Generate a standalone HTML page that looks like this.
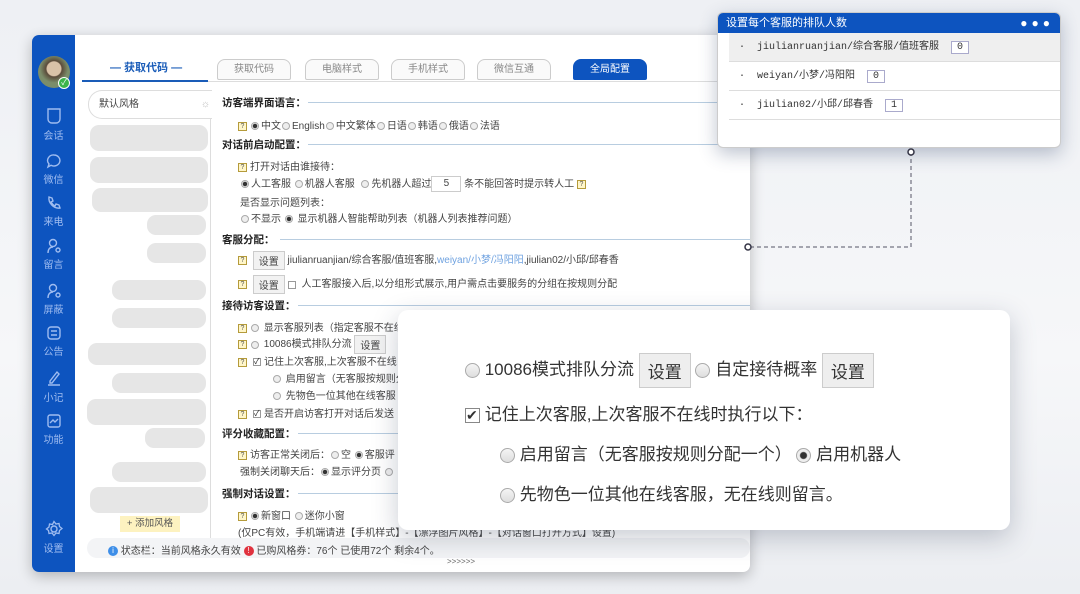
<!DOCTYPE html>
<html><head><meta charset="utf-8"><style>
*{margin:0;padding:0;box-sizing:border-box}
body{width:1080px;height:594px;overflow:hidden;background:linear-gradient(180deg,#eef0f4 0%,#f6f7f9 60%,#eceef2 100%);font-family:"Liberation Sans","Noto Sans CJK SC",sans-serif;position:relative;color:#333}
.abs{position:absolute}
.win{left:32px;top:35px;width:718px;height:537px;background:#fff;border-radius:7px;overflow:hidden;box-shadow:0 4px 14px rgba(0,0,0,.25)}
.side{left:0;top:0;width:43px;height:537px;background:#0d54bf}
.si{position:absolute;left:0;width:43px;text-align:center;color:#9fbcf0;font-size:10px}
.si svg{display:block;margin:0 auto 2px}
.tab{position:absolute;top:24px;height:21px;width:74px;border:1px solid #ccc;border-radius:8px 8px 2px 2px;background:#fafafa;font-size:10px;color:#888;text-align:center;line-height:20px}
.pill{position:absolute;background:#e6e6e6;border-radius:9px;height:20px}
.c{font-size:10px;color:#444;white-space:nowrap;position:absolute}
.h{font-size:10.5px;font-weight:bold;color:#222;position:absolute;white-space:nowrap}
.hl{position:absolute;height:1px;background:#b8cde0}
.q{display:inline-block;width:9px;height:9px;border:1px solid #b59b3b;background:#fff6c9;font-size:7px;line-height:8px;text-align:center;color:#555;vertical-align:middle;margin-right:3px}
.r{display:inline-block;width:8px;height:8px;border:1px solid #aaa;border-radius:50%;background:#eee;vertical-align:middle;margin:0 2px 0 1px}
.r.on{background:radial-gradient(circle,#333 0 2px,#eee 2.5px)}
.cb{display:inline-block;width:8px;height:8px;border:1px solid #999;background:#fff;vertical-align:middle;margin:0 3px;font-size:8px;line-height:6px;color:#222}
.btn{display:inline-block;border:1px solid #ccc;background:#f2f2f2;padding:1px 5px;font-size:10px;vertical-align:middle}
.big{font-size:17px;color:#333;position:absolute;white-space:nowrap}
.br{display:inline-block;width:15px;height:15px;border:1px solid #aaa;border-radius:50%;background:linear-gradient(#f5f5f5,#ddd);vertical-align:middle}
.bb{display:inline-block;border:1px solid #ccc;background:#eee;padding:4px 8px;font-size:17px;vertical-align:middle}
</style></head><body>

<div class="abs win">
 <div class="abs side">
  <div class="abs" style="left:6px;top:21px;width:32px;height:32px;border-radius:50%;background:radial-gradient(circle at 50% 40%,#d9c2a8 0 7px,#5a4a3a 8px,#7b8d6a 14px)"></div>
  <div class="abs" style="left:26px;top:42px;width:12px;height:12px;border-radius:50%;background:#3cb44a;border:1px solid #fff;color:#fff;font-size:8px;line-height:10px;text-align:center">✓</div>
  <div class="si" style="top:72px"><svg width="16" height="18" viewBox="0 0 16 18"><path d="M2 2h12v10a4 4 0 0 1-4 4H6a4 4 0 0 1-4-4z" fill="none" stroke="#9fbcf0" stroke-width="1.4"/></svg>会话</div>
  <div class="si" style="top:118px"><svg width="16" height="16" viewBox="0 0 16 16"><path d="M8 2a6 5.5 0 1 1-3 10.3L2 14l1-3A6 5.5 0 0 1 8 2z" fill="none" stroke="#9fbcf0" stroke-width="1.4"/></svg>微信</div>
  <div class="si" style="top:160px"><svg width="16" height="16" viewBox="0 0 16 16"><path d="M3 2l3 1 1 3-2 1c1 2 2 3 4 4l1-2 3 1 1 3c-6 1-12-5-11-11z" fill="none" stroke="#9fbcf0" stroke-width="1.4"/></svg>来电</div>
  <div class="si" style="top:203px"><svg width="16" height="16" viewBox="0 0 16 16"><circle cx="7" cy="5" r="3.5" fill="none" stroke="#9fbcf0" stroke-width="1.4"/><path d="M2 15c0-4 2-6 5-6M10 12a2 2 0 1 0 4 0a2 2 0 1 0-4 0" fill="none" stroke="#9fbcf0" stroke-width="1.4"/></svg>留言</div>
  <div class="si" style="top:248px"><svg width="16" height="16" viewBox="0 0 16 16"><circle cx="7" cy="5" r="3.5" fill="none" stroke="#9fbcf0" stroke-width="1.4"/><path d="M2 15c0-4 2-6 5-6M10 12a2 2 0 1 0 4 0a2 2 0 1 0-4 0" fill="none" stroke="#9fbcf0" stroke-width="1.4"/></svg>屏蔽</div>
  <div class="si" style="top:290px"><svg width="16" height="16" viewBox="0 0 16 16"><rect x="2" y="2" width="12" height="12" rx="3" fill="none" stroke="#9fbcf0" stroke-width="1.4"/><path d="M5 6h6M5 10h6" stroke="#9fbcf0" stroke-width="1.4"/></svg>公告</div>
  <div class="si" style="top:334px"><svg width="16" height="18" viewBox="0 0 16 18"><path d="M4 12l7-9 2 2-7 9H4zM2 16h12" fill="none" stroke="#9fbcf0" stroke-width="1.4"/></svg>小记</div>
  <div class="si" style="top:378px"><svg width="16" height="16" viewBox="0 0 16 16"><rect x="2" y="2" width="12" height="12" rx="2" fill="none" stroke="#9fbcf0" stroke-width="1.4"/><path d="M4 10l3-3 2 2 3-3" fill="none" stroke="#9fbcf0" stroke-width="1.4"/></svg>功能</div>
  <div class="si" style="top:485px"><svg width="18" height="18" viewBox="0 0 18 18"><circle cx="9" cy="9" r="3" fill="none" stroke="#9fbcf0" stroke-width="1.4"/><path d="M9 1.5l2 2.5 3-.5.5 3 2.5 2-2.5 2-.5 3-3-.5-2 2.5-2-2.5-3 .5-.5-3L1.5 9 4 7l.5-3 3 .5z" fill="none" stroke="#9fbcf0" stroke-width="1.3"/></svg>设置</div>
 </div>

 <div class="abs" style="left:78px;top:24px;font-size:11px;font-weight:bold;color:#1a5cb8">— 获取代码 —</div>
 <div class="abs" style="left:50px;top:45px;width:126px;height:2px;background:#1a5cb8"></div>
 <div class="tab" style="left:185px">获取代码</div>
 <div class="tab" style="left:273px">电脑样式</div>
 <div class="tab" style="left:359px">手机样式</div>
 <div class="tab" style="left:445px">微信互通</div>
 <div class="tab" style="left:541px;background:#0d54bf;color:#fff;border-color:#0d54bf">全局配置</div>
 <div class="abs" style="left:176px;top:46px;width:542px;height:1px;background:#ddd"></div>

 <div class="abs" style="left:56px;top:55px;width:124px;height:29px;border:1px solid #ddd;border-right:none;border-radius:14px 0 0 14px;font-size:10px;line-height:27px;padding-left:10px;color:#444">默认风格<span style="position:absolute;right:2px;color:#bbb">☼</span></div>
 <div class="abs" style="left:178px;top:84px;width:1px;height:420px;background:#ddd"></div>
 <div class="pill" style="left:58px;top:90px;width:118px;height:26px"></div>
 <div class="pill" style="left:58px;top:122px;width:118px;height:26px"></div>
 <div class="pill" style="left:60px;top:153px;width:116px;height:24px"></div>
 <div class="pill" style="left:115px;top:180px;width:59px"></div>
 <div class="pill" style="left:115px;top:208px;width:59px"></div>
 <div class="pill" style="left:80px;top:245px;width:94px"></div>
 <div class="pill" style="left:80px;top:273px;width:94px"></div>
 <div class="pill" style="left:56px;top:308px;width:118px;height:22px"></div>
 <div class="pill" style="left:80px;top:338px;width:94px"></div>
 <div class="pill" style="left:55px;top:364px;width:119px;height:26px"></div>
 <div class="pill" style="left:113px;top:393px;width:60px"></div>
 <div class="pill" style="left:80px;top:427px;width:94px"></div>
 <div class="pill" style="left:58px;top:452px;width:118px;height:26px"></div>
 <div class="abs" style="left:88px;top:481px;width:60px;height:16px;background:#fdf2c0;font-size:9.5px;line-height:16px;text-align:center;color:#555">+ 添加风格</div>

 <div class="h" style="left:190px;top:60px">访客端界面语言：</div><div class="hl" style="left:276px;top:67px;width:442px"></div>
 <div class="c" style="left:206px;top:82px"><span class="q">?</span><span class="r on"></span>中文<span class="r"></span>English<span class="r"></span>中文繁体<span class="r"></span>日语<span class="r"></span>韩语<span class="r"></span>俄语<span class="r"></span>法语</div>
 <div class="h" style="left:190px;top:102px">对话前启动配置：</div><div class="hl" style="left:276px;top:109px;width:442px"></div>
 <div class="c" style="left:206px;top:123px"><span class="q">?</span>打开对话由谁接待：</div>
 <div class="c" style="left:208px;top:140px"><span class="r on"></span>人工客服 <span class="r"></span>机器人客服 &nbsp;<span class="r"></span>先机器人超过<span style="display:inline-block;width:30px;height:16px;border:1px solid #ccc;text-align:center;line-height:14px;vertical-align:middle">5</span> 条不能回答时提示转人工 <span class="q">?</span></div>
 <div class="c" style="left:208px;top:159px">是否显示问题列表：</div>
 <div class="c" style="left:208px;top:175px"><span class="r"></span>不显示 <span class="r on"></span> 显示机器人智能帮助列表（机器人列表推荐问题）</div>
 <div class="h" style="left:190px;top:197px">客服分配：</div><div class="hl" style="left:248px;top:204px;width:470px"></div>
 <div class="c" style="left:206px;top:216px"><span class="q">?</span> <span class="btn">设置</span> jiulianruanjian/综合客服/值班客服,<span style="color:#6fa2e0">weiyan/小梦/冯阳阳</span>,jiulian02/小邱/邱春香</div>
 <div class="c" style="left:206px;top:240px"><span class="q">?</span> <span class="btn">设置</span><span class="cb"></span> 人工客服接入后,以分组形式展示,用户需点击要服务的分组在按规则分配</div>
 <div class="h" style="left:190px;top:263px">接待访客设置：</div><div class="hl" style="left:266px;top:270px;width:452px"></div>
 <div class="c" style="left:206px;top:284px"><span class="q">?</span><span class="r"></span> 显示客服列表（指定客服不在线</div>
 <div class="c" style="left:206px;top:300px"><span class="q">?</span><span class="r"></span> 10086模式排队分流 <span class="btn">设置</span></div>
 <div class="c" style="left:206px;top:318px"><span class="q">?</span><span class="cb">✓</span>记住上次客服,上次客服不在线</div>
 <div class="c" style="left:240px;top:335px"><span class="r"></span> 启用留言（无客服按规则分</div>
 <div class="c" style="left:240px;top:352px"><span class="r"></span> 先物色一位其他在线客服</div>
 <div class="c" style="left:206px;top:370px"><span class="q">?</span><span class="cb">✓</span>是否开启访客打开对话后发送</div>
 <div class="h" style="left:190px;top:391px">评分收藏配置：</div><div class="hl" style="left:266px;top:398px;width:452px"></div>
 <div class="c" style="left:206px;top:411px"><span class="q">?</span>访客正常关闭后：<span class="r"></span>空 <span class="r on"></span>客服评</div>
 <div class="c" style="left:208px;top:428px">强制关闭聊天后：<span class="r on"></span>显示评分页 <span class="r"></span></div>
 <div class="h" style="left:190px;top:451px">强制对话设置：</div><div class="hl" style="left:266px;top:458px;width:452px"></div>
 <div class="c" style="left:206px;top:472px"><span class="q">?</span><span class="r on"></span>新窗口 <span class="r"></span>迷你小窗</div>
 <div class="c" style="left:206px;top:489px">(仅PC有效，手机端请进【手机样式】-【漂浮图片风格】-【对话窗口打开方式】设置)</div>
 <div class="abs" style="left:55px;top:503px;width:663px;height:20px;background:#f3f4f6;border-radius:10px"></div>
 <div class="c" style="left:76px;top:507px"><span style="display:inline-block;width:10px;height:10px;border-radius:50%;background:#3d8ee8;color:#fff;font-size:8px;line-height:10px;text-align:center;vertical-align:middle">i</span> 状态栏：当前风格永久有效 <span style="display:inline-block;width:10px;height:10px;border-radius:50%;background:#e0323e;color:#fff;font-size:8px;line-height:10px;text-align:center;vertical-align:middle">!</span> 已购风格券：76个 已使用72个 剩余4个。</div>
 <div class="c" style="left:415px;top:522px;font-size:8px;color:#666">&gt;&gt;&gt;&gt;&gt;&gt;</div>
</div>

<!-- top-right popup -->
<div class="abs" style="left:717px;top:12px;width:344px;height:136px;background:#fff;border-radius:6px;overflow:hidden;box-shadow:0 6px 18px rgba(40,60,100,.3);border:1px solid #ccc">
 <div style="height:20px;background:#0d54bf;color:#fff;font-size:11px;line-height:20px;padding-left:8px">设置每个客服的排队人数<span style="position:absolute;right:6px;top:0;letter-spacing:4px;font-size:12px">●●●</span></div>
 <div class="abs" style="left:11px;top:20px;width:333px;height:29px;background:#efefef;border-bottom:1px solid #ddd;font-family:'Liberation Mono','Noto Sans CJK SC',monospace;font-size:10px;line-height:29px;padding-left:10px">·&nbsp; jiulianruanjian/综合客服/值班客服 &nbsp;<span style="border:1px solid #aac;background:#fff;padding:0 5px">0</span></div>
 <div class="abs" style="left:11px;top:49px;width:333px;height:29px;border-bottom:1px solid #ddd;font-family:'Liberation Mono','Noto Sans CJK SC',monospace;font-size:10px;line-height:29px;padding-left:10px">·&nbsp; weiyan/小梦/冯阳阳 &nbsp;<span style="border:1px solid #aac;background:#fff;padding:0 5px">0</span></div>
 <div class="abs" style="left:11px;top:78px;width:333px;height:29px;border-bottom:1px solid #ddd;font-family:'Liberation Mono','Noto Sans CJK SC',monospace;font-size:10px;line-height:29px;padding-left:10px">·&nbsp; jiulian02/小邱/邱春香 &nbsp;<span style="border:1px solid #aac;background:#fff;padding:0 5px">1</span></div>
</div>
<svg class="abs" style="left:740px;top:145px" width="180" height="110"><path d="M171 7V102H8" fill="none" stroke="#556" stroke-dasharray="4 3"/><circle cx="171" cy="7" r="3" fill="#fff" stroke="#334" stroke-width="1.5"/><circle cx="8" cy="102" r="3" fill="#fff" stroke="#334" stroke-width="1.5"/></svg>

<!-- big popup -->
<div class="abs" style="left:398px;top:310px;width:612px;height:220px;background:#fff;border-radius:10px;box-shadow:0 8px 26px rgba(40,50,80,.25)"></div>
<div class="big" style="left:465px;top:353px"><span class="br"></span> 10086模式排队分流 <span class="bb">设置</span> <span class="br"></span> 自定接待概率 <span class="bb">设置</span></div>
<div class="big" style="left:465px;top:400px"><span style="display:inline-block;width:15px;height:15px;border:1px solid #888;background:#fff;font-size:14px;line-height:13px;vertical-align:middle">✔</span> 记住上次客服,上次客服不在线时执行以下：</div>
<div class="big" style="left:500px;top:440px"><span class="br"></span> 启用留言（无客服按规则分配一个） <span class="br" style="background:radial-gradient(circle,#333 0 3px,#eee 4px)"></span> 启用机器人</div>
<div class="big" style="left:500px;top:480px"><span class="br"></span> 先物色一位其他在线客服，无在线则留言。</div>
</body></html>
